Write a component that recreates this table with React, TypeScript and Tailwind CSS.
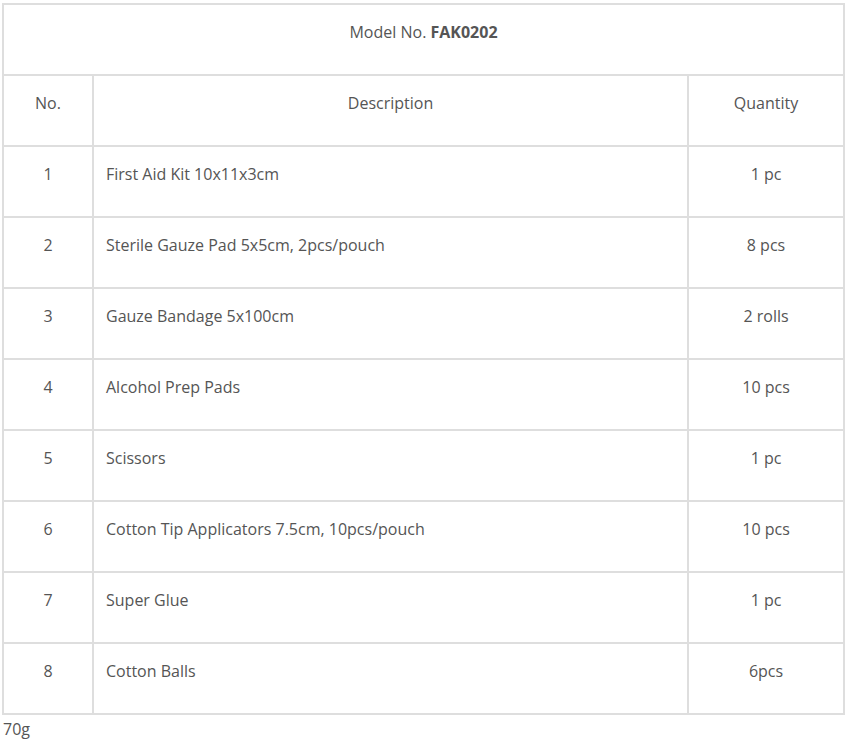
const rows: [string, string, string][] = [
  ["1", "First Aid Kit 10x11x3cm", "1 pc"],
  ["2", "Sterile Gauze Pad 5x5cm, 2pcs/pouch", "8 pcs"],
  ["3", "Gauze Bandage 5x100cm", "2 rolls"],
  ["4", "Alcohol Prep Pads", "10 pcs"],
  ["5", "Scissors", "1 pc"],
  ["6", "Cotton Tip Applicators 7.5cm, 10pcs/pouch", "10 pcs"],
  ["7", "Super Glue", "1 pc"],
  ["8", "Cotton Balls", "6pcs"],
];

const cell = "border-2 border-[#dedede] h-[71px] align-top pt-[15px] leading-[24px]";

const App = () => {
  return (
    <div className="bg-white min-h-[746px] pl-[2px] pt-[3px] text-[16px] text-[#555] font-['Open_Sans',sans-serif]">
      <table className="w-[841px] border-collapse table-fixed">
        <colgroup>
          <col className="w-[90px]" />
          <col className="w-[595px]" />
          <col className="w-[156px]" />
        </colgroup>
        <tbody>
          <tr>
            <td colSpan={3} className={`${cell} text-center`}>
              Model No. <strong className="font-bold">FAK0202</strong>
            </td>
          </tr>
          <tr>
            <td className={`${cell} text-center`}>No.</td>
            <td className={`${cell} text-center`}>Description</td>
            <td className={`${cell} text-center`}>Quantity</td>
          </tr>
          {rows.map(([no, desc, qty]) => (
            <tr key={no}>
              <td className={`${cell} text-center`}>{no}</td>
              <td className={`${cell} px-[12px]`}>{desc}</td>
              <td className={`${cell} text-center`}>{qty}</td>
            </tr>
          ))}
        </tbody>
      </table>
      <p className="mt-[2px] pl-[1px] leading-[24px]">70g</p>
    </div>
  );
};

export default App;
